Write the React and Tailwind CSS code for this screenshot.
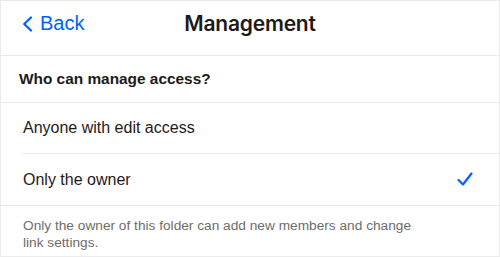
function Header() {
  return (
    <div className="relative flex h-[55px] items-start border-b border-[#ebebeb] pt-[10px]">
      <button className="flex items-center gap-[7px] pl-[21px] text-[20px] leading-[25px] text-[#0061fe]">
        <svg width="11" height="16" viewBox="0 0 11 16" fill="none">
          <path d="M9 1.5 L2.2 8 L9 14.5" stroke="currentColor" strokeWidth="2.2" strokeLinecap="round" strokeLinejoin="round" />
        </svg>
        <span>Back</span>
      </button>
      <h1 className="absolute left-0 right-0 top-[10px] text-center text-[21px] font-semibold leading-[26px] text-[#1e1919] font-['Inter',sans-serif] tracking-[-0.2px]">
        Management
      </h1>
    </div>
  );
}

function OptionRow({ text, checked, inset }) {
  return (
    <div className="flex h-[51px] items-center pl-[22px]">
      <div
        className={
          inset
            ? "flex h-full flex-1 items-center border-b border-[#ebebeb] pr-[26px]"
            : "flex h-full flex-1 items-center pr-[26px]"
        }
      >
        <span className="flex-1 text-[16px] text-[#1e1919]">{text}</span>
        {checked && (
          <svg width="16" height="15" viewBox="0 0 16 15" fill="none">
            <path d="M1.5 8 L6 12.5 L14.5 1.5" stroke="#0061fe" strokeWidth="2.2" strokeLinecap="round" strokeLinejoin="round" />
          </svg>
        )}
      </div>
    </div>
  );
}

export default function App() {
  return (
    <div className="h-[257px] w-[500px] overflow-hidden border border-[#ebebeb] bg-white font-['Liberation_Sans',Arial,sans-serif]">
      <Header />
      <div className="flex h-[47px] items-center border-b border-[#ebebeb] pl-[18px]">
        <span className="text-[15.4px] font-bold text-[#1e1919]">Who can manage access?</span>
      </div>
      <OptionRow text="Anyone with edit access" inset />
      <div className="border-b border-[#ebebeb]">
        <OptionRow text="Only the owner" checked />
      </div>
      <p className="px-[22px] pt-[11px] text-[13.7px] leading-[17px] text-[#6f6c69]">
        Only the owner of this folder can add new members and change
        <br />
        link settings.
      </p>
    </div>
  );
}
